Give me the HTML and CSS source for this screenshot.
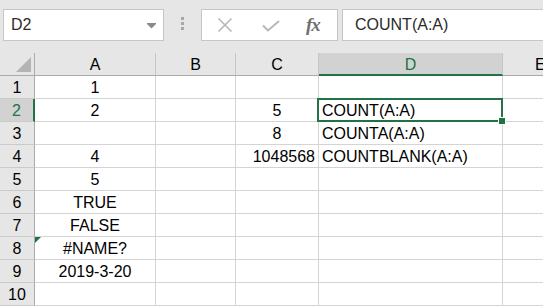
FILE: index.html
```html
<!DOCTYPE html>
<html>
<head>
<meta charset="utf-8">
<link rel="stylesheet" href="styles.css">
</head>
<body>
<div class="app">
  <div class="toolbar">
    <div class="namebox">
      <span class="nb-text">D2</span>
      <svg class="nb-arrow" width="9" height="6" viewBox="0 0 9 6"><rect x="0" y="0" width="9" height="1" fill="#8a8a8a"/><polygon points="0,1 9,1 4.5,5.5" fill="#8a8a8a"/></svg>
    </div>
    <div class="grip"><i></i><i></i><i></i></div>
    <div class="fbtns">
      <svg class="ic-x" width="16" height="16" viewBox="0 0 16 16"><path d="M1.5 1.5 L14.5 14.5 M14.5 1.5 L1.5 14.5" stroke="#b8b8b8" stroke-width="1.6" fill="none"/></svg>
      <svg class="ic-check" width="18" height="12" viewBox="0 0 18 12"><path d="M1 5.5 L6 10.5 L17 1" stroke="#b8b8b8" stroke-width="2" fill="none"/></svg>
      <span class="ic-fx">fx</span>
    </div>
    <div class="finput">COUNT(A:A)</div>
  </div>
  <div class="sheet">
    <div class="h corner"><span class="tri"></span></div>
    <div class="h col">A</div>
    <div class="h col">B</div>
    <div class="h col">C</div>
    <div class="h col sel">D</div>
    <div class="h col e">E</div>

    <div class="h row">1</div>
    <div class="c ca">1</div><div class="c"></div><div class="c"></div><div class="c"></div><div class="c"></div>

    <div class="h row sel">2</div>
    <div class="c ca">2</div><div class="c"></div><div class="c ca">5</div><div class="c cl active">COUNT(A:A)<span class="selbox"><span class="handle"></span></span></div><div class="c"></div>

    <div class="h row">3</div>
    <div class="c ca"></div><div class="c"></div><div class="c ca">8</div><div class="c cl">COUNTA(A:A)</div><div class="c"></div>

    <div class="h row">4</div>
    <div class="c ca">4</div><div class="c"></div><div class="c cr">1048568</div><div class="c cl">COUNTBLANK(A:A)</div><div class="c"></div>

    <div class="h row">5</div>
    <div class="c ca">5</div><div class="c"></div><div class="c"></div><div class="c"></div><div class="c"></div>

    <div class="h row">6</div>
    <div class="c ca">TRUE</div><div class="c"></div><div class="c"></div><div class="c"></div><div class="c"></div>

    <div class="h row">7</div>
    <div class="c ca">FALSE</div><div class="c"></div><div class="c"></div><div class="c"></div><div class="c"></div>

    <div class="h row">8</div>
    <div class="c ca flagged">#NAME?<span class="flag"></span></div><div class="c"></div><div class="c"></div><div class="c"></div><div class="c"></div>

    <div class="h row">9</div>
    <div class="c ca">2019-3-20</div><div class="c"></div><div class="c"></div><div class="c"></div><div class="c"></div>

    <div class="h row">10</div>
    <div class="c ca"></div><div class="c"></div><div class="c"></div><div class="c"></div><div class="c"></div>
  </div>
</div>
</body>
</html>
```
FILE: styles.css
```css
html, body {
  margin: 0;
  padding: 0;
  background: #e6e6e6;
  overflow: hidden;
}
.app {
  width: 543px;
  height: 306px;
  overflow: hidden;
  font-family: "Liberation Sans", Arial, sans-serif;
  font-size: 16px;
  color: #000;
}
.toolbar {
  height: 53px;
  box-sizing: border-box;
  padding-top: 9px;
  display: flex;
  align-items: flex-start;
}
.namebox {
  margin-left: 3px;
  width: 161px;
  height: 32px;
  box-sizing: border-box;
  background: #fff;
  border: 1px solid #c6c6c6;
  display: flex;
  align-items: center;
  padding-left: 7px;
  padding-right: 7px;
}
.nb-text {
  flex: 1;
  color: #2b2b2b;
  line-height: 30px;
}
.nb-arrow {
  display: block;
  margin-top: 1px;
}
.grip {
  width: 37px;
  height: 32px;
  display: flex;
  flex-direction: column;
  align-items: center;
  padding-top: 8px;
  box-sizing: border-box;
  gap: 2px;
}
.grip i {
  display: block;
  width: 3px;
  height: 3px;
  background: #a8a8a8;
}
.fbtns {
  width: 137px;
  height: 32px;
  box-sizing: border-box;
  background: #fff;
  border: 1px solid #c6c6c6;
  display: flex;
  align-items: center;
}
.ic-x {
  display: block;
  margin-left: 15px;
}
.ic-check {
  display: block;
  margin-left: 29px;
  margin-top: 1px;
}
.ic-fx {
  margin-left: 26px;
  font-family: "Liberation Serif", "Times New Roman", serif;
  font-style: italic;
  font-weight: bold;
  font-size: 19px;
  color: #707070;
  line-height: 30px;
  letter-spacing: -1px;
}
.finput {
  flex: 1;
  margin-left: 4px;
  margin-right: -6px;
  height: 32px;
  box-sizing: border-box;
  background: #fff;
  border: 1px solid #c6c6c6;
  padding-left: 12px;
  line-height: 30px;
  color: #2b2b2b;
}
.sheet {
  display: grid;
  grid-template-columns: 35px 121px 80px 83px 184px 60px;
  grid-auto-rows: 23px;
  background: #fff;
  width: 563px;
}
.sheet > div {
  box-sizing: border-box;
  border-right: 1px solid #d4d4d4;
  border-bottom: 1px solid #d4d4d4;
  line-height: 24px;
  white-space: nowrap;
  position: relative;
}
.h {
  background: #e6e6e6;
  text-align: center;
}
.h.col {
  border-right-color: #c6c6c6;
  border-bottom-color: #ababab;
}
.h.col.sel {
  background: #d2d2d2;
  color: #217346;
  border-bottom: 2px solid #217346;
}
.h.col.e {
  text-align: left;
  padding-left: 32px;
}
.h.corner {
  border-right-color: #ababab;
  border-bottom-color: #ababab;
}
.tri {
  position: absolute;
  left: 16px;
  top: 4px;
  width: 0;
  height: 0;
  border-left: 15px solid transparent;
  border-bottom: 15px solid #b4b4b4;
}
.h.row {
  border-right-color: #ababab;
  border-bottom-color: #cacaca;
}
.h.row.sel {
  background: #d2d2d2;
  color: #217346;
  border-right: 2px solid #217346;
}
.c.ca {
  text-align: center;
}
.c.cr {
  text-align: right;
  padding-right: 3px;
}
.c.cl {
  padding-left: 3px;
}
.c.active {
  overflow: visible;
  z-index: 2;
}
.selbox {
  position: absolute;
  left: -2px;
  top: -1px;
  right: -1px;
  bottom: -1px;
  border: 2px solid #217346;
  box-sizing: border-box;
}
.handle {
  position: absolute;
  right: -4px;
  bottom: -4px;
  width: 6px;
  height: 6px;
  background: #217346;
  box-shadow: 0 0 0 1px #fff;
}
.flag {
  position: absolute;
  left: 0;
  top: 0;
  width: 0;
  height: 0;
  border-top: 6px solid #217346;
  border-right: 6px solid transparent;
}
```
